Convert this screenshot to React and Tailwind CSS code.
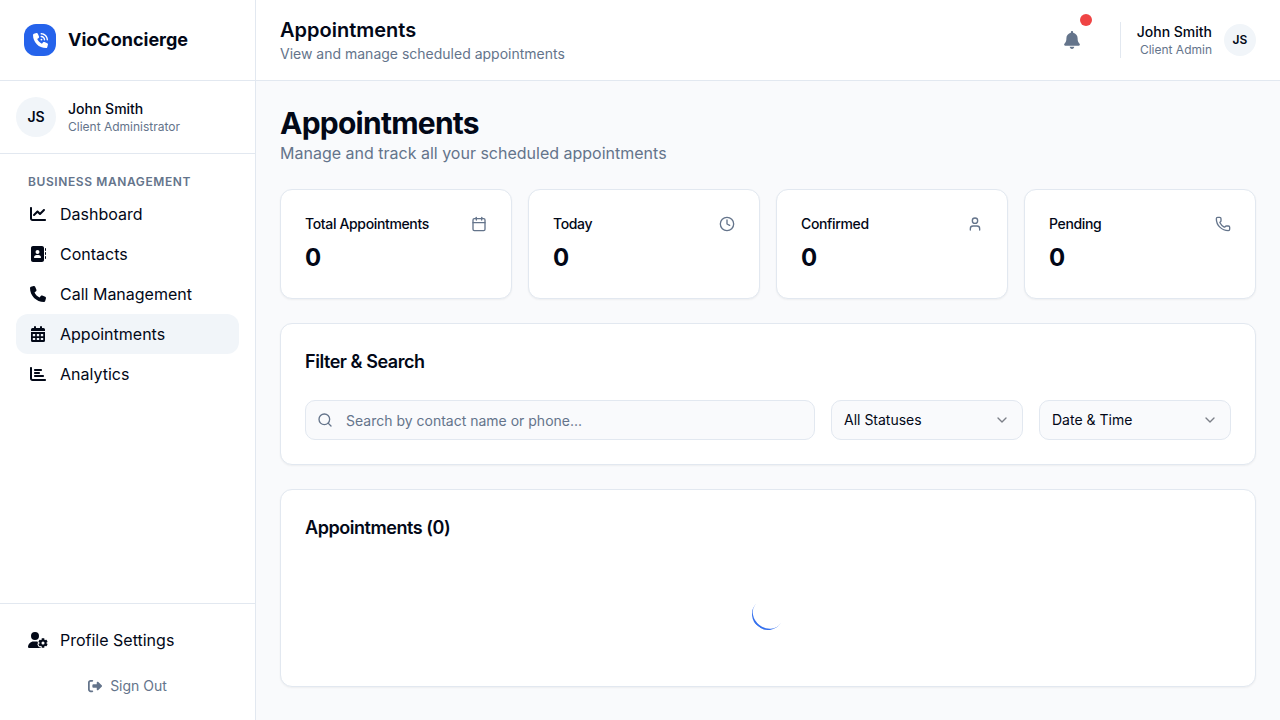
import { Calendar, ChevronDown, Clock, Phone, Search, User } from "lucide-react";
import {
  FaAddressBook,
  FaBell,
  FaChartBar,
  FaChartLine,
  FaPhone,
  FaPhoneVolume,
  FaRightFromBracket,
  FaUserGear,
} from "react-icons/fa6";

function CalendarGridIcon({ className }) {
  return (
    <svg viewBox="0 0 14 16" fill="currentColor" className={className}>
      <path d="M3 1a1 1 0 0 1 2 0v1h4V1a1 1 0 0 1 2 0v1h1.500A1.500 1.500 0 0 1 14 3.500V5H0V3.500A1.500 1.500 0 0 1 1.500 2H3Z" />
      <path
        fillRule="evenodd"
        d="M0 6h14v8.500A1.500 1.500 0 0 1 12.500 16h-11A1.500 1.500 0 0 1 0 14.500ZM1.800 8v2.200h2.400V8ZM5.800 8v2.200h2.400V8ZM9.800 8v2.200h2.400V8ZM1.800 12v2.100h2.400V12ZM5.800 12v2.100h2.400V12ZM9.800 12v2.100h2.400V12Z"
      />
    </svg>
  );
}

const navItems = [
  { label: "Dashboard", icon: FaChartLine },
  { label: "Contacts", icon: FaAddressBook },
  { label: "Call Management", icon: FaPhone },
  { label: "Appointments", icon: CalendarGridIcon, active: true },
  { label: "Analytics", icon: FaChartBar },
];

const stats = [
  { label: "Total Appointments", value: 0, icon: Calendar },
  { label: "Today", value: 0, icon: Clock },
  { label: "Confirmed", value: 0, icon: User },
  { label: "Pending", value: 0, icon: Phone },
];

function NavItem({ label, icon: Icon, active, iconClass = "size-4" }) {
  return (
    <a
      className={`flex h-10 items-center gap-3 rounded-xl px-3 text-base ${
        active ? "bg-[#f1f5f9]" : ""
      }`}
    >
      <span className="flex w-5 justify-center">
        <Icon className={`shrink-0 ${iconClass}`} />
      </span>
      {label}
    </a>
  );
}

function Sidebar() {
  return (
    <aside className="flex w-64 shrink-0 flex-col border-r border-[#e2e8f0] bg-white">
      <div className="flex h-[81px] items-center gap-3 border-b border-[#e2e8f0] px-6">
        <div className="flex size-8 items-center justify-center rounded-xl bg-[#2563eb] text-white">
          <FaPhoneVolume className="size-[15px]" />
        </div>
        <span className="text-lg leading-7 font-bold">VioConcierge</span>
      </div>
      <div className="flex items-center gap-3 border-b border-[#e2e8f0] p-4">
        <div className="flex size-10 items-center justify-center rounded-full bg-[#f1f5f9] text-sm font-semibold">
          JS
        </div>
        <div>
          <p className="text-sm font-medium">John Smith</p>
          <p className="text-xs text-[#64748b]">Client Administrator</p>
        </div>
      </div>
      <nav className="flex-1 p-4">
        <h3 className="flex h-6 items-center px-3 text-xs font-semibold tracking-wider text-[#64748b] uppercase">
          Business Management
        </h3>
        {navItems.map((item) => (
          <NavItem key={item.label} {...item} />
        ))}
      </nav>
      <div className="border-t border-[#e2e8f0] p-4">
        <NavItem label="Profile Settings" icon={FaUserGear} iconClass="h-4 w-5" />
        <button className="mt-2 flex h-9 w-full items-center justify-center gap-2 text-sm text-[#64748b]">
          <FaRightFromBracket className="size-3.5" />
          Sign Out
        </button>
      </div>
    </aside>
  );
}

function Header() {
  return (
    <header className="flex h-[81px] shrink-0 items-center justify-between border-b border-[#e2e8f0] bg-white px-6">
      <div>
        <h2 className="text-xl leading-7 font-semibold">Appointments</h2>
        <p className="text-sm text-[#64748b]">View and manage scheduled appointments</p>
      </div>
      <div className="flex items-center gap-7">
        <button className="relative flex size-10 items-center justify-center text-[#64748b]">
          <FaBell className="h-[18px] w-4" />
          <span className="absolute -top-1.5 right-0 size-3 rounded-full bg-[#ef4444]" />
        </button>
        <div className="flex items-center gap-3 border-l border-[#e2e8f0] pl-4">
          <div className="text-right">
            <p className="text-sm font-medium">John Smith</p>
            <p className="text-xs text-[#64748b]">Client Admin</p>
          </div>
          <div className="flex size-8 items-center justify-center rounded-full bg-[#f1f5f9] text-xs font-semibold">
            JS
          </div>
        </div>
      </div>
    </header>
  );
}

function Card({ children }) {
  return (
    <section className="rounded-xl border border-[#e2e8f0] bg-white p-6 shadow-[0_1px_2px_0_rgba(0,0,0,0.05)]">
      {children}
    </section>
  );
}

function SelectBox({ children }) {
  return (
    <button className="flex h-10 w-48 items-center justify-between rounded-[10px] border border-[#e2e8f0] bg-[#f9fafc] px-3 text-sm">
      {children}
      <ChevronDown className="size-4 opacity-50" />
    </button>
  );
}

export default function App() {
  return (
    <div className="flex h-screen overflow-hidden bg-[#f9fafc] font-['Inter',sans-serif] text-[#020817]">
      <Sidebar />
      <div className="flex min-w-0 flex-1 flex-col">
        <Header />
        <main className="flex flex-1 flex-col gap-6 p-6">
          <div>
            <h1 className="text-3xl leading-9 font-bold tracking-tight">Appointments</h1>
            <p className="text-base text-[#64748b]">
              Manage and track all your scheduled appointments
            </p>
          </div>
          <div className="grid grid-cols-4 gap-4">
            {stats.map(({ label, value, icon: Icon }) => (
              <Card key={label}>
                <div className="flex items-center justify-between pb-2">
                  <h3 className="text-sm font-medium tracking-tight">{label}</h3>
                  <Icon className="size-4 text-[#64748b]" />
                </div>
                <div className="text-2xl leading-8 font-bold">{value}</div>
              </Card>
            ))}
          </div>
          <Card>
            <h3 className="text-lg leading-7 font-semibold tracking-tight">Filter &amp; Search</h3>
            <div className="mt-6 flex gap-4">
              <div className="flex h-10 flex-1 items-center gap-[13px] rounded-[10px] border border-[#e2e8f0] bg-[#f9fafc] px-[11px] text-[#64748b]">
                <Search className="size-4" />
                <input
                  className="h-full min-w-0 flex-1 bg-transparent text-sm outline-none placeholder:text-[#64748b]"
                  placeholder="Search by contact name or phone..."
                />
              </div>
              <SelectBox>All Statuses</SelectBox>
              <SelectBox>Date &amp; Time</SelectBox>
            </div>
          </Card>
          <Card>
            <h3 className="text-lg leading-7 font-semibold tracking-tight">Appointments (0)</h3>
            <div className="mt-6 flex justify-center py-8">
              <div className="size-8 rotate-[38deg] rounded-full border-b-2 border-[#3470ee]" />
            </div>
          </Card>
        </main>
      </div>
    </div>
  );
}
